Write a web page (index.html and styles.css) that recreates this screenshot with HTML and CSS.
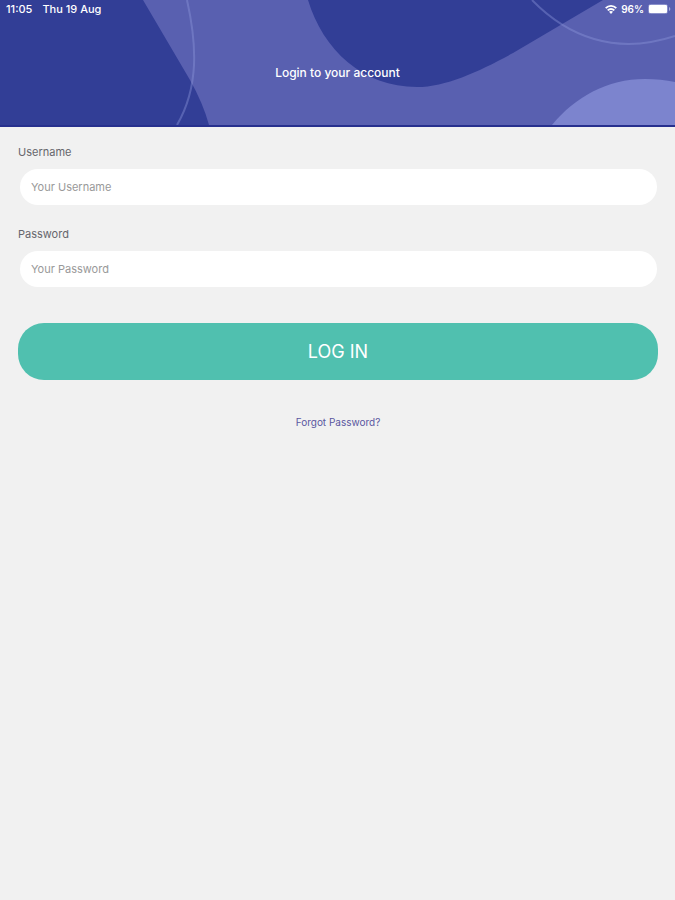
FILE: index.html
```html
<!DOCTYPE html>
<html lang="en">
<head>
    <meta charset="UTF-8">
    <meta name="viewport" content="width=device-width, initial-scale=1.0">
    <title>Login</title>
    <link rel="stylesheet" href="styles.css">
</head>
<body>

    <header class="header">
        <svg class="header-shapes" viewBox="0 0 675 125" preserveAspectRatio="none" aria-hidden="true">
            <rect width="675" height="125" fill="#323e96"/>
            <path d="M143 0 L190 80 Q203 103 209 125 H675 V0 H603 L513 53 C480 71 446 87 417 87 C363 87 323 50 308 0 Z" fill="#5960b0"/>
            <path d="M552 125 C575 97 607 79 645 79 Q661 79 675 82 V125 Z" fill="#7c84ce"/>
            <path d="M187 0 C197 45 199 87 177 125" fill="none" stroke="#8e98dc" stroke-opacity=".4" stroke-width="2"/>
            <path d="M532 0 C567 36 615 56 675 36" fill="none" stroke="#8e98dc" stroke-opacity=".4" stroke-width="2"/>
        </svg>

        <div class="status-bar">
            <div class="status-left">
                <span>11:05</span>
                <span>Thu 19 Aug</span>
            </div>
            <div class="status-right">
                <svg width="12" height="9" viewBox="0 0 12 9" aria-hidden="true">
                    <g fill="none" stroke="#fff" stroke-width="1.8">
                        <path d="M.7 3.2 C3.6 .2 8.4 .2 11.3 3.2"/>
                        <path d="M2.7 5.4 C4.6 3.5 7.4 3.5 9.3 5.4"/>
                    </g>
                    <path d="M6 8.9 L4 6.8 C5.1 5.8 6.9 5.8 8 6.8 Z" fill="#fff"/>
                </svg>
                <span>96%</span>
                <svg width="23" height="10" viewBox="0 0 23 10" aria-hidden="true">
                    <rect x=".5" y=".5" width="19" height="9" rx="2" fill="none" stroke="#8a90cb"/>
                    <rect x="1" y="1" width="18" height="8" rx="1" fill="#fff"/>
                    <path d="M21 3 C22.8 3.6 22.8 6.4 21 7 Z" fill="#a9aedb"/>
                </svg>
            </div>
        </div>

        <h1 class="header-title">Login to your account</h1>
    </header>

    <main>
        <form class="login-form">
            <label for="username">Username</label>
            <input type="text" id="username" name="username" placeholder="Your Username">

            <label for="password">Password</label>
            <input type="password" id="password" name="password" placeholder="Your Password">

            <button type="submit" class="login-button">LOG IN</button>
        </form>

        <a class="forgot-link" href="#">Forgot Password?</a>
    </main>

</body>
</html>
```
FILE: styles.css
```css
* {
    box-sizing: border-box;
}

body {
    margin: 0;
    font-family: Inter, "Liberation Sans", sans-serif;
    background-color: #f1f1f1;
}

/* artwork, status bar and title share one grid cell */
.header {
    display: grid;
    height: 127px;
    color: #fff;
    background-color: #323e96;
    border-bottom: 2px solid #27308e;
}

.header-shapes,
.status-bar,
.header-title {
    grid-area: 1 / 1;
}

.header-shapes {
    display: block;
    width: 100%;
    height: 125px;
}

.status-bar {
    display: flex;
    justify-content: space-between;
    align-self: start;
    padding: 3px 4px 0 6px;
    font-size: 10px;
    line-height: 12px;
    font-weight: 600;
}

.status-left,
.status-right {
    display: flex;
    align-items: center;
}

.status-left {
    gap: 10px;
    font-size: 11px;
    font-weight: 500;
}

.status-right {
    gap: 4px;
}

.header-title {
    align-self: center;
    margin: 20px 0 0;
    font-size: 12px;
    line-height: 16px;
    font-weight: 500;
    text-align: center;
}

main {
    padding: 18px 17px 18px 18px;
}

.login-form {
    display: flex;
    flex-direction: column;
}

.login-form label {
    margin-bottom: 10px;
    font-size: 11px;
    line-height: 14px;
    color: #66666c;
}

.login-form input {
    height: 36px;
    margin: 0 1px 22px 2px;
    padding: 0 11px;
    border: none;
    border-radius: 18px;
    background-color: #fff;
    font-family: inherit;
    font-size: 11px;
    color: #333;
}

.login-form input::placeholder {
    color: #999;
    opacity: 1;
}

.login-button {
    height: 57px;
    margin-top: 14px;
    border: none;
    border-radius: 26px;
    background-color: #50c0af;
    color: #fff;
    font-family: inherit;
    font-size: 18px;
    cursor: pointer;
}

.login-button:hover {
    background-color: #43ae9e;
}

.forgot-link {
    display: block;
    width: fit-content;
    margin: 35px auto 0;
    font-size: 10px;
    line-height: 14px;
    color: #5a56a0;
    text-decoration: none;
}
```
